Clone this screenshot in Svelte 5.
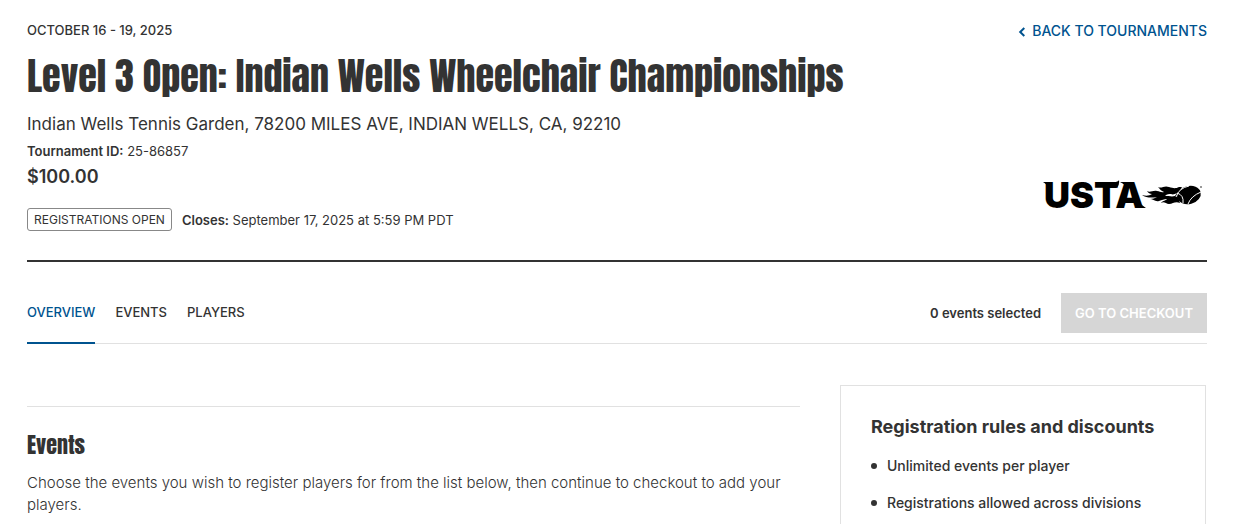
<script>
	let selected = $state(0);
	let active = $state('Overview');

	const tabs = ['Overview', 'Events', 'Players'];
	const rules = ['Unlimited events per player', 'Registrations allowed across divisions'];
</script>

<main>
	<header>
		<div class="top">
			<span class="date">October 16 - 19, 2025</span>
			<a class="back" href="#tournaments">
				<svg width="8" height="12" viewBox="0 0 8 12" aria-hidden="true">
					<path d="M6.3 3 2.2 7l4.1 4" fill="none" stroke="currentColor" stroke-width="2" />
				</svg>
				Back to tournaments
			</a>
		</div>

		<h1>Level 3 Open: Indian Wells Wheelchair Championships</h1>

		<div class="details">
			<div>
				<p class="location">Indian Wells Tennis Garden, 78200 MILES AVE, INDIAN WELLS, CA, 92210</p>
				<p class="number"><b>Tournament ID:</b> 25-86857</p>
				<p class="price">$100.00</p>
				<div class="status">
					<span class="badge">Registrations open</span>
					<span><b>Closes:</b> September 17, 2025 at 5:59 PM PDT</span>
				</div>
			</div>

			<svg class="logo" width="164" height="52" viewBox="0 -10 164 52" role="img" aria-label="USTA">
				<text x="1" y="29">USTA</text>
				<path d="M0 3H9V9H5Q4 5 0 3ZM64 3H71Q75 3 76 1Q77 6 73 9H64ZM77 3H90V9H83Q82 5 77 3ZM96 24L103 29H94Z" />
				<path d="M99 16C103 17 106 17 109 15C107 15 105 14 104 12C107 14 110 11 114 12C117 12 118 14 121 13C118 12 117 10 115 8C119 10 121 6 126 8C130 9 132 10 136 8L139 8L134 16L137 24C132 22 130 25 126 25C123 25 121 22 118 24C120 21 123 22 124 20C121 20 119 21 116 22C112 23 110 20 107 20C110 20 112 19 114 18C109 19 103 19 99 16Z" />
				<path d="M122 17C124 15 126 15 128 15C130 16 132 15 134 14L132 17C129 18 126 17 122 17Z" fill="#fff" />
				<ellipse cx="146" cy="16" rx="12" ry="9" transform="rotate(-15 146 16)" />
				<path d="M133 18Q136 9 146 7M134 14Q141 16 140 24M145 25Q148 17 158 13" fill="none" stroke="#fff" stroke-width="1" />
				<circle cx="158" cy="8" r="1" fill="#777" />
			</svg>
		</div>
	</header>

	<div class="toolbar">
		<nav>
			{#each tabs as tab}
				<button class="tab" class:active={active === tab} onclick={() => (active = tab)}>{tab}</button>
			{/each}
		</nav>
		<div class="cart">
			<span>{selected} events selected</span>
			<button class="checkout" disabled={selected === 0}>Go to checkout</button>
		</div>
	</div>

	<div class="content">
		<section class="events">
			<h2>Events</h2>
			<p>Choose the events you wish to register players for from the list below, then continue to checkout to add your players.</p>
		</section>

		<aside>
			<h3>Registration rules and discounts</h3>
			<ul>
				{#each rules as rule}
					<li>{rule}</li>
				{/each}
			</ul>
		</aside>
	</div>
</main>

<style>
	:global(body) {
		margin: 0;
		background: #fff;
		overflow: hidden;
	}

	main {
		padding: 20px 32px 0 27px;
		color: #333;
		font: 14px/20px Inter, sans-serif;
	}

	h1, h2, h3, p, ul {
		margin: 0;
		padding: 0;
	}

	b {
		font-weight: 600;
	}

	button {
		border: 0;
		padding: 0;
		font: inherit;
		text-transform: uppercase;
	}

	header {
		border-bottom: 2px solid #333;
		padding-bottom: 29px;
	}

	.top {
		display: flex;
		justify-content: space-between;
	}

	.date {
		font-size: 13px;
		font-weight: 500;
		text-transform: uppercase;
	}

	.back {
		display: flex;
		align-items: center;
		gap: 6px;
		color: #00538f;
		font-weight: 500;
		line-height: 22px;
		text-decoration: none;
		text-transform: uppercase;
	}

	h1, h2 {
		font-family: Anton, "Liberation Sans Narrow", sans-serif;
		font-weight: 400;
	}

	h1 {
		padding-bottom: 2px;
		font-size: 38px;
		line-height: 68px;
	}

	.details {
		display: flex;
		justify-content: space-between;
		align-items: flex-end;
	}

	.location {
		font-size: 17px;
		line-height: 24px;
	}

	.number {
		padding-top: 5px;
		font-size: 13px;
	}

	.price {
		font-size: 18px;
		font-weight: 600;
		line-height: 32px;
	}

	.status {
		display: flex;
		align-items: center;
		gap: 10px;
		padding-top: 15px;
		font-size: 13px;
	}

	.badge {
		border: 1px solid #888;
		border-radius: 3px;
		padding: 0 6px;
		font-size: 12px;
		line-height: 21px;
		text-transform: uppercase;
	}

	.logo {
		margin-bottom: 10px;
	}

	.logo text {
		font: 900 36px Inter, sans-serif;
	}

	.toolbar {
		display: flex;
		justify-content: space-between;
		border-bottom: 1px solid #e1e1e1;
		padding-top: 31px;
	}

	nav {
		display: flex;
		gap: 20px;
		margin-bottom: -1px;
	}

	.tab {
		border-bottom: 2px solid transparent;
		padding-bottom: 11px;
		background: none;
		color: #333;
		font-size: 13px;
		font-weight: 500;
		cursor: pointer;
	}

	.tab.active {
		border-color: #00538f;
		color: #00538f;
	}

	.cart {
		display: flex;
		align-items: center;
		gap: 20px;
		padding-bottom: 10px;
		font-size: 13px;
		font-weight: 600;
	}

	.checkout {
		padding: 10px 14px;
		background: #d6d6d6;
		color: #fff;
	}

	.content {
		display: grid;
		grid-template-columns: minmax(0, 773fr) minmax(0, 366fr);
		gap: 40px;
		padding: 41px 1px 0 0;
	}

	.events {
		margin-top: 21px;
		border-top: 1px solid #e1e1e1;
		padding-top: 20px;
	}

	h2 {
		padding-bottom: 9px;
		font-size: 22px;
		line-height: 36px;
	}

	.events p {
		font-size: 15px;
		font-weight: 300;
		line-height: 22px;
	}

	aside {
		border: 1px solid #e1e1e1;
		padding: 30px;
	}

	h3 {
		padding-bottom: 1px;
		font-size: 18px;
		font-weight: 700;
		line-height: 22px;
	}

	ul {
		list-style: none;
	}

	li {
		display: flex;
		align-items: center;
		gap: 10px;
		margin-top: 17px;
		font-weight: 500;
	}

	li::before {
		content: "";
		width: 6px;
		height: 6px;
		border-radius: 50%;
		background: #333;
	}
</style>
